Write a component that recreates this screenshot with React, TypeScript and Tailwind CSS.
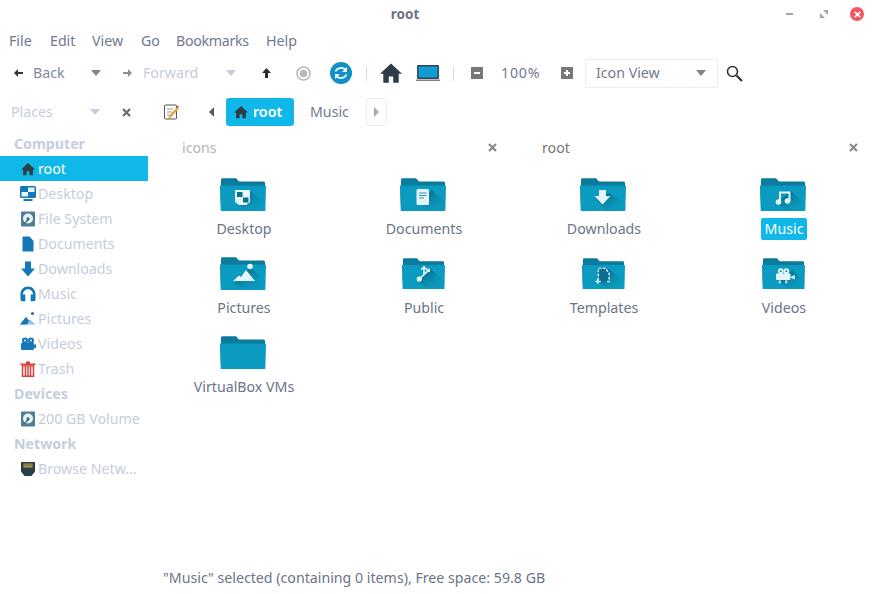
import type { ReactNode } from "react";

const FONT = "font-['Noto_Sans',sans-serif]";

function Caret({ className = "" }: { className?: string }) {
  return (
    <svg width="10" height="6" viewBox="0 0 10 6" className={className}>
      <path d="M0 0h10L5 6z" fill="currentColor" />
    </svg>
  );
}

function CloseX({ className = "" }: { className?: string }) {
  return (
    <svg width="9" height="9" viewBox="0 0 9 9" className={className}>
      <path d="M1 1l7 7M8 1L1 8" stroke="currentColor" strokeWidth="2.2" />
    </svg>
  );
}

function HomeIcon({ size = 14, color = "#2b3d47" }: { size?: number; color?: string }) {
  return (
    <svg width={size} height={size} viewBox="0 0 16 16">
      <path d="M8 1L0 8.6h2.4V15h4V10.5h3.2V15h4V8.6H16z" fill={color} />
    </svg>
  );
}

// sidebar icons, 16x16
const placeIcons: Record<string, ReactNode> = {
  desktop: (
    <>
      <rect x="0" y="0" width="16" height="12" rx="1.5" fill="#1377b8" />
      <rect x="8" y="1.500" width="6.500" height="4.500" fill="#e6f4fb" />
      <rect x="1.500" y="6" width="6.500" height="4.500" fill="#e6f4fb" />
      <rect x="3.500" y="13" width="9" height="2" fill="#1377b8" />
    </>
  ),
  drive: (
    <>
      <rect x="1" y="0.500" width="14" height="15" rx="1" fill="#4e7f93" />
      <circle cx="8" cy="7.500" r="5" fill="#e6f2f6" />
      <circle cx="8" cy="7.500" r="1.600" fill="#4e7f93" />
      <path d="M3.500 13.500l4.500-6 1.400 1.200z" fill="#2b4c5a" />
    </>
  ),
  documents: <path d="M2.500 0.500h7l4 4.500v10.500h-11z" fill="#1377b8" />,
  downloads: <path d="M5 0.500h6v7h4L8 15.500 1 7.500h4z" fill="#1377b8" />,
  music: (
    <path
      d="M8 .5C3.600 .5 .5 3.800 .5 8v5.500c0 1.100 .8 1.800 1.800 1.800h3V8.500H3C3.200 5.500 5.200 3.300 8 3.300s4.800 2.200 5 5.200h-2.300v6.800h3c1 0 1.800-.7 1.800-1.800V8C15.500 3.800 12.400 .5 8 .5z"
      fill="#1377b8"
    />
  ),
  pictures: (
    <>
      <circle cx="12.500" cy="2.500" r="1.600" fill="#1377b8" />
      <path d="M0 13.500L6 6l3 3.500 1-1 5.500 5z" fill="#8cc3e0" />
      <path d="M0 13.500L6 6l3 3.500-2 4z" fill="#1377b8" />
    </>
  ),
  videos: (
    <>
      <circle cx="5" cy="4.500" r="3" fill="#1377b8" />
      <circle cx="11" cy="4.500" r="3" fill="#1377b8" />
      <rect x="1" y="6.500" width="13" height="7.500" rx="1.500" fill="#1377b8" />
      <path d="M14 9l2-1v4.500l-2-1z" fill="#1377b8" />
      <circle cx="5" cy="4.500" r="1" fill="#dff1fb" />
      <circle cx="11" cy="4.500" r="1" fill="#dff1fb" />
    </>
  ),
  trash: (
    <>
      <path d="M.5 2.500h15v1.700H.5zM6 .5h4v2H6z" fill="#d9403c" />
      <path
        d="M2.500 5h11v10.300h-11zM5.500 6v8.500M8 6v8.500M10.500 6v8.500"
        fill="none"
        stroke="#d9403c"
        strokeWidth="1.500"
      />
    </>
  ),
  network: (
    <>
      <path d="M1 1h14v9.500l-3.500 4.500h-7L1 10.500z" fill="#2b3d47" />
      <path d="M3.500 2.500h9v4h-9z" fill="#c8a94a" />
      <path d="M5 2.500v3M7 2.500v3M9 2.500v3M11 2.500v3" stroke="#2b3d47" strokeWidth=".8" />
    </>
  ),
};

function PlaceIcon({ name }: { name: string }) {
  return (
    <svg width="16" height="16" viewBox="0 0 16 16" className="shrink-0">
      {placeIcons[name]}
    </svg>
  );
}

type Place =
  | { kind: "head"; label: string }
  | { kind: "item"; label: string; icon: string; active?: boolean };

const places: Place[] = [
  { kind: "head", label: "Computer" },
  { kind: "item", label: "root", icon: "home", active: true },
  { kind: "item", label: "Desktop", icon: "desktop" },
  { kind: "item", label: "File System", icon: "drive" },
  { kind: "item", label: "Documents", icon: "documents" },
  { kind: "item", label: "Downloads", icon: "downloads" },
  { kind: "item", label: "Music", icon: "music" },
  { kind: "item", label: "Pictures", icon: "pictures" },
  { kind: "item", label: "Videos", icon: "videos" },
  { kind: "item", label: "Trash", icon: "trash" },
  { kind: "head", label: "Devices" },
  { kind: "item", label: "200 GB Volume", icon: "drive" },
  { kind: "head", label: "Network" },
  { kind: "item", label: "Browse Netw...", icon: "network" },
];

const W = "#e4f6fc";

// glyphs drawn in the folder's 46x33 space; the long shadow is cast down-right from them
const folderGlyphs: Record<string, { glyph: ReactNode; shadow: string }> = {
  Desktop: {
    shadow: "M29 12L46 27V33H26L15 24z",
    glyph: (
      <>
        <path d="M15 12h15v12l-4 3h-7l-4-3z" fill={W} />
        <rect x="17" y="14" width="5.500" height="5" fill="#0b6f8d" />
        <rect x="23" y="19.500" width="5.500" height="5" fill="#0b6f8d" />
      </>
    ),
  },
  Documents: {
    shadow: "M32 12L46 26V33H30L19 24z",
    glyph: (
      <>
        <rect x="16.500" y="11" width="12.500" height="16" rx="1.500" fill={W} />
        <path d="M19 15h7.500M19 17.500h7.500M19 20h5" stroke="#3f8fa8" strokeWidth="1.200" />
      </>
    ),
  },
  Downloads: {
    shadow: "M29 15L46 28V33H25L16 20z",
    glyph: <path d="M19 12h7v6h4.500l-8 8.500-8-8.500H19z" fill={W} />,
  },
  Music: {
    shadow: "M31 13L46 27V33H26L17 25z",
    glyph: (
      <>
        <circle cx="18.500" cy="24" r="2.800" fill={W} />
        <circle cx="27.500" cy="23" r="2.800" fill={W} />
        <path d="M20 24V14.500h9.500V23" fill="none" stroke={W} strokeWidth="2" />
      </>
    ),
  },
  Pictures: {
    shadow: "M30 10L46 24V33H28L14 27z",
    glyph: (
      <>
        <circle cx="30" cy="9.500" r="2.800" fill={W} />
        <path d="M13 24l6-5.500 2 1.500 5-7 9 11z" fill={W} />
      </>
    ),
  },
  Public: {
    shadow: "M31 12L46 26V33H28L17 25z",
    glyph: (
      <>
        <circle cx="18.500" cy="22.500" r="2.800" fill={W} />
        <path
          d="M20 21l8-7.500M23.500 17.500V11M20.500 12.500l3-3 3 3"
          fill="none"
          stroke={W}
          strokeWidth="1.700"
        />
        <rect x="26.500" y="11.500" width="3.500" height="3.500" fill={W} />
      </>
    ),
  },
  Templates: {
    shadow: "M29 12L46 27V33H27L17 25V12z",
    glyph: (
      <>
        <path d="M17 11h8l4 5v9H17z" fill="#0b6f8d" />
        <path d="M17.500 24V11h7.500l4 5v9h-2" fill="none" stroke={W} strokeWidth="1.500" strokeDasharray="3 1.400" />
        <path d="M17 22v5.500M14.500 25h5.500" stroke={W} strokeWidth="1.500" />
      </>
    ),
  },
  Videos: {
    shadow: "M33 13L46 26V33H28L17 24z",
    glyph: (
      <>
        <circle cx="20" cy="14" r="3" fill={W} />
        <circle cx="26" cy="14" r="3" fill={W} />
        <circle cx="20" cy="14" r="1" fill="#0b7a9b" />
        <circle cx="26" cy="14" r="1" fill="#0b7a9b" />
        <rect x="15" y="16.500" width="15.500" height="7" rx="1" fill={W} />
        <path d="M31 20l4-2v5l-4-2zM18 24h2v3h-2zM25 24h2v3h-2z" fill={W} />
      </>
    ),
  },
};

// Public, Templates and Videos sit a little narrower than the others in the reference
const narrowFolders = ["Public", "Templates", "Videos"];

function Folder({ name }: { name: string }) {
  const art = folderGlyphs[name];
  const narrow = narrowFolders.includes(name);
  return (
    <svg
      viewBox="0 0 46 33"
      className={narrow ? "-ml-[1px] h-[31px] w-[43px] mb-[1px] mt-[1px]" : "-ml-[2px] h-[33px] w-[46px]"}
    >
      <defs>
        <linearGradient id="fold-shadow" x1="0.200" y1="0.200" x2="0.900" y2="0.900">
          <stop offset="0" stopColor="#06506a" stopOpacity=".65" />
          <stop offset="1" stopColor="#0b9bc0" stopOpacity="0" />
        </linearGradient>
      </defs>
      <path d="M1 33L0 8Q0 7.500 1 7.500V1.500Q1 .3 2.500 .3H16L19 3.500H43.500Q45 3.500 45 5V33z" fill="#0b7a9b" />
      <path d="M.2 8Q.2 7.500 1 7.500H45Q46 7.500 46 8.500L45.300 33H.8z" fill="#0b9bc0" />
      {art && <path d={art.shadow} fill="url(#fold-shadow)" />}
      {art?.glyph}
    </svg>
  );
}

const folders = ["Desktop", "Documents", "Downloads", "Music", "Pictures", "Public", "Templates", "Videos", "VirtualBox VMs"];

export default function App() {
  return (
    <div className={`${FONT} flex h-[594px] w-[874px] flex-col overflow-hidden bg-white text-[14.200px] text-[#6f7a90]`}>
      {/* title bar */}
      <div className="relative flex h-[27px] shrink-0 items-center justify-center pt-[1px] pr-[64px]">
        <span className="text-[13.500px] font-bold text-[#6c7383]">root</span>
        <div className="absolute top-0 right-[10px] flex h-[28px] items-center">
          <div className="h-[2px] w-[7px] bg-[#a0a3ad]" />
          <svg width="8" height="8" viewBox="0 0 8 8" className="ml-[27px]">
            <path d="M3 0h5v5zM5 8H0V3z" fill="#a0a3ad" />
          </svg>
          <div className="ml-[22px] flex h-[14px] w-[14px] items-center justify-center rounded-full bg-[#f2555f]">
            <CloseX className="h-[7px] w-[7px] text-white" />
          </div>
        </div>
      </div>

      {/* menu bar */}
      <div className="flex h-[28px] shrink-0 items-center pl-[9px]">
        <span className="w-[41px]">File</span>
        <span className="w-[42px]">Edit</span>
        <span className="w-[49px]">View</span>
        <span className="w-[35px]">Go</span>
        <span className="w-[90px] tracking-[-0.3px]">Bookmarks</span>
        <span>Help</span>
      </div>

      {/* toolbar */}
      <div className="flex h-[36px] shrink-0 items-center pl-[14px]">
        <svg width="9" height="8" viewBox="0 0 9 8" className="text-[#333]">
          <path d="M0 4l4-4v3h5v2H4v3z" fill="currentColor" />
        </svg>
        <span className="ml-[10px] w-[58px] text-[#8089a0]">Back</span>
        <Caret className="text-[#7c8398]" />
        <svg width="9" height="8" viewBox="0 0 9 8" className="ml-[22px] text-[#8a8f9a]">
          <path d="M9 4L5 0v3H0v2h5v3z" fill="currentColor" />
        </svg>
        <span className="ml-[11px] w-[83px] text-[#c5cddc]">Forward</span>
        <Caret className="text-[#c5cddc]" />
        <svg width="9" height="10" viewBox="0 0 9 10" className="ml-[26px] text-[#2e2e2e]">
          <path d="M4.500 0L9 5H6v5H3V5H0z" fill="currentColor" />
        </svg>
        <svg width="15" height="15" viewBox="0 0 15 15" className="ml-[25px]">
          <circle cx="7.500" cy="7.500" r="6.500" fill="none" stroke="#b9b9b9" strokeWidth="1.600" />
          <circle cx="7.500" cy="7.500" r="3.800" fill="#b9b9b9" />
        </svg>
        <svg width="22" height="22" viewBox="0 0 22 22" className="ml-[19px]">
          <circle cx="11" cy="11" r="11" fill="#128fc4" />
          <path d="M5.500 9.500a6 5 0 0 1 10-2M16.500 12.500a6 5 0 0 1-10 2" fill="none" stroke="#eaf7fc" strokeWidth="1.800" />
          <path d="M17 5v5h-5zM5 17v-5h5z" fill="#eaf7fc" />
        </svg>
        <div className="ml-[14px] h-[15px] w-px bg-[#dcdcdc]" />
        <div className="ml-[13px]">
          <HomeIcon size={22} />
        </div>
        <svg width="24" height="17" viewBox="0 0 24 17" className="ml-[14px]">
          <rect x="1" y="0" width="22" height="14" rx="1" fill="#33454f" />
          <rect x="2.500" y="1.500" width="19" height="11" fill="#129bd1" />
          <path d="M0 14.500h24V16H0z" fill="#7b8286" />
        </svg>
        <div className="ml-[13px] h-[15px] w-px bg-[#dcdcdc]" />
        <div className="ml-[17px] flex h-[12px] w-[12px] items-center justify-center bg-[#787878]">
          <div className="h-[2px] w-[6px] bg-white" />
        </div>
        <span className="ml-[18px] w-[42px] tracking-[0.8px]">100%</span>
        <div className="relative ml-[18px] flex h-[12px] w-[12px] items-center justify-center bg-[#787878]">
          <div className="h-[2px] w-[6px] bg-white" />
          <div className="absolute h-[6px] w-[2px] bg-white" />
        </div>
        <div className="ml-[12px] flex h-[29px] w-[133px] items-center justify-between rounded-[2px] border border-[#ededf0] pr-[11px] pl-[10px]">
          <span>Icon View</span>
          <Caret className="text-[#7c8398]" />
        </div>
        <svg width="17" height="17" viewBox="0 0 17 17" className="ml-[8px]">
          <circle cx="6.500" cy="6.500" r="5" fill="none" stroke="#333" strokeWidth="1.600" />
          <path d="M10.500 10.500L16 16" stroke="#333" strokeWidth="2.200" />
        </svg>
      </div>

      <div className="flex min-h-0 flex-1 pt-[7px]">
        {/* places sidebar */}
        <div className="flex w-[148px] shrink-0 flex-col">
          <div className="flex h-[28px] items-center pl-[11px]">
            <span className="w-[79px] text-[#c5cddc]">Places</span>
            <Caret className="text-[#c5cddc]" />
            <CloseX className="ml-[22px] text-[#6a6a6a]" />
          </div>
          <div className="flex flex-col pt-[5px] text-[#c5cddc]">
            {places.map((p) =>
              p.kind === "head" ? (
                <div key={p.label} className="flex h-[25px] items-center pl-[14px] font-bold">
                  {p.label}
                </div>
              ) : (
                <div
                  key={p.label}
                  className={`flex h-[25px] items-center gap-[2px] pl-[20px] ${p.active ? "bg-[#0fb8e8] text-white" : ""}`}
                >
                  {p.icon === "home" ? (
                    <span className="flex w-[16px] shrink-0 justify-center">
                      <HomeIcon size={14} />
                    </span>
                  ) : (
                    <PlaceIcon name={p.icon} />
                  )}
                  <span className="whitespace-nowrap">{p.label}</span>
                </div>
              ),
            )}
          </div>
        </div>

        <div className="flex min-w-0 flex-1 flex-col">
          {/* path bar */}
          <div className="flex h-[28px] shrink-0 items-center pl-[16px]">
            <svg width="15" height="16" viewBox="0 0 15 16">
              <rect x=".5" y="1" width="12" height="14" rx="1" fill="#fff" stroke="#555" />
              <path d="M3 5h6M3 8h5M3 11h3" stroke="#999" />
              <path d="M5 12l8-9 2 1.500-8 9-3 1z" fill="#e8a33d" />
              <path d="M13 3l1-1.500 1 1-1 1.500z" fill="#d9363e" />
            </svg>
            <svg width="5" height="10" viewBox="0 0 5 10" className="ml-[30px] text-[#555]">
              <path d="M5 0v10L0 5z" fill="currentColor" />
            </svg>
            <div className="ml-[12px] flex h-[28px] w-[68px] items-center gap-[5px] rounded-[3px] bg-[#0fb8e8] pl-[8px] font-semibold text-white">
              <HomeIcon size={14} />
              <span>root</span>
            </div>
            <span className="ml-[16px] w-[56px]">Music</span>
            <div className="flex h-[28px] w-[21px] items-center justify-center rounded-[3px] border border-[#ededf0]">
              <svg width="5" height="10" viewBox="0 0 5 10" className="text-[#a9a9a9]">
                <path d="M0 0v10l5-5z" fill="currentColor" />
              </svg>
            </div>
          </div>

          {/* split pane headers */}
          <div className="flex h-[44px] shrink-0 items-center text-[#b5b5b5]">
            <div className="flex w-[360px] items-center justify-between pr-[11px] pl-[34px]">
              <span>icons</span>
              <CloseX className="text-[#8a8a8a]" />
            </div>
            <div className="flex flex-1 items-center justify-between pr-[16px] pl-[34px] text-[#777]">
              <span>root</span>
              <CloseX className="text-[#8a8a8a]" />
            </div>
          </div>

          {/* icon grid */}
          <div className="ml-[6px] grid flex-1 auto-rows-[79px] grid-cols-4 content-start pt-[8px] text-[#6b7488]">
            {folders.map((name) => (
              <div key={name} className="flex flex-col items-center">
                <Folder name={name} />
                <span
                  className={`mt-[7px] rounded-[2px] px-[4px] leading-[22px] whitespace-nowrap ${name === "Music" ? "bg-[#0fb8e8] text-white" : ""}`}
                >
                  {name}
                </span>
              </div>
            ))}
          </div>

          <div className="flex h-[32px] shrink-0 items-center pl-[15px] text-[#6b7488]">
            "Music" selected (containing 0 items), Free space: 59.8 GB
          </div>
        </div>
      </div>
    </div>
  );
}
